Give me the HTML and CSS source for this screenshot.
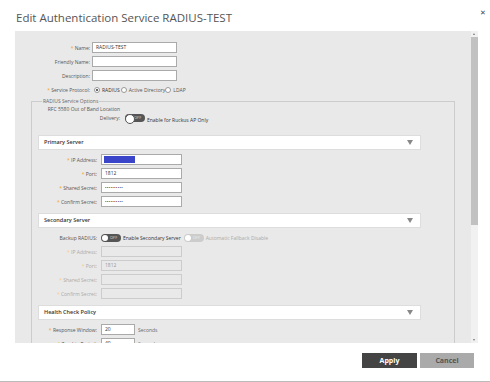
FILE: index.html
```html
<!DOCTYPE html>
<html lang="en">

<head>
    <meta charset="utf-8">
    <title>Edit Authentication Service</title>
    <link rel="stylesheet" href="styles.css">
</head>

<body>
    <div class="dialog">
        <header class="kop">
            <h1>Edit Authentication Service RADIUS-TEST</h1>
            <span class="luk">&#x2715;</span>
        </header>

        <div class="panel">
            <div class="indhold">
                <div class="felt">
                    <label><em>*</em> Name:</label>
                    <span class="input">RADIUS-TEST</span>
                </div>
                <div class="felt">
                    <label>Friendly Name:</label>
                    <span class="input"></span>
                </div>
                <div class="felt">
                    <label>Description:</label>
                    <span class="input"></span>
                </div>
                <div class="felt">
                    <label><em>*</em> Service Protocol:</label>
                    <span class="radioer">
                        <span class="radio valgt"></span><b>RADIUS</b>
                        <span class="radio"></span>Active Directory
                        <span class="radio"></span>LDAP
                    </span>
                </div>

                <fieldset class="muligheder">
                    <legend>RADIUS Service Options</legend>

                    <div class="rfc">
                        <label><span>RFC 5580 Out of Band Location</span><span>Delivery:</span></label>
                        <span class="toggle hvid">OFF</span>
                        <span class="tekst">Enable for Ruckus AP Only</span>
                    </div>

                    <div class="sektion">
                        <div class="sektionskop">Primary Server <i class="pil"></i></div>
                        <div class="felt lille">
                            <label><em>*</em> IP Address:</label>
                            <span class="input bred"><span class="markering"></span></span>
                        </div>
                        <div class="felt lille">
                            <label><em>*</em> Port:</label>
                            <span class="input bred">1812</span>
                        </div>
                        <div class="felt lille">
                            <label><em>*</em> Shared Secret:</label>
                            <span class="input bred prikker">••••••••••</span>
                        </div>
                        <div class="felt lille">
                            <label><em>*</em> Confirm Secret:</label>
                            <span class="input bred prikker">••••••••••</span>
                        </div>
                    </div>

                    <div class="sektion">
                        <div class="sektionskop">Secondary Server <i class="pil"></i></div>
                        <div class="felt lille">
                            <label>Backup RADIUS:</label>
                            <span class="valg">
                                <span class="toggle">OFF</span>
                                <span class="tekst">Enable Secondary Server</span>
                                <span class="toggle slaaet-fra">OFF</span>
                                <span class="tekst graa">Automatic Fallback Disable</span>
                            </span>
                        </div>
                        <div class="felt lille deaktiv">
                            <label><em>*</em> IP Address:</label>
                            <span class="input bred"></span>
                        </div>
                        <div class="felt lille deaktiv">
                            <label><em>*</em> Port:</label>
                            <span class="input bred">1812</span>
                        </div>
                        <div class="felt lille deaktiv">
                            <label><em>*</em> Shared Secret:</label>
                            <span class="input bred"></span>
                        </div>
                        <div class="felt lille deaktiv">
                            <label><em>*</em> Confirm Secret:</label>
                            <span class="input bred"></span>
                        </div>
                    </div>

                    <div class="sektion">
                        <div class="sektionskop">Health Check Policy <i class="pil"></i></div>
                        <div class="felt lille">
                            <label><em>*</em> Response Window:</label>
                            <span class="input kort">20</span>
                            <span class="enhed">Seconds</span>
                        </div>
                        <div class="felt lille">
                            <label><em>*</em> Zombie Period:</label>
                            <span class="input kort">40</span>
                            <span class="enhed">Seconds</span>
                        </div>
                    </div>
                </fieldset>
            </div>

            <div class="rullebjaelke">
                <span class="op"></span>
                <span class="greb"></span>
                <span class="spor"></span>
                <span class="ned"></span>
            </div>
        </div>

        <footer class="knapper">
            <button class="anvend">Apply</button>
            <button class="annuller">Cancel</button>
        </footer>
    </div>
</body>

</html>
```

FILE: styles.css
```css
* {
    box-sizing: border-box;
    margin: 0px;
    padding: 0px;
}

body {
    width: 490px;
    height: 382px;
    overflow: hidden;
    background: #fff;
    font-family: "Open Sans", "Liberation Sans", sans-serif;
    color: #555;
}

.dialog {
    height: 382px;
    display: flex;
    flex-direction: column;
    border-bottom: 1px solid #bbb;
}

.kop {
    height: 31px;
    display: flex;
    justify-content: space-between;
    align-items: flex-start;
    padding: 10px 4px 0px 16px;
}

.kop h1 {
    font-size: 11.5px;
    font-weight: normal;
    color: #555;
    line-height: 16px;
}

.luk {
    font-size: 7px;
    color: #444;
    line-height: 8px;
    margin-top: -1px;
}

.panel {
    margin-left: 15px;
    width: 463px;
    height: 312px;
    display: flex;
    background: #e9e9e9;
}

.indhold {
    flex: 1;
    overflow: hidden;
    padding-top: 11px;
}

.felt {
    display: flex;
    align-items: center;
    height: 11px;
    margin-bottom: 3px;
    font-size: 5px;
}

.felt label {
    width: 77px;
    text-align: right;
    padding-right: 2px;
    color: #555;
}

em {
    font-style: normal;
    color: #f5a623;
}

.input {
    width: 85px;
    height: 11px;
    background: #fff;
    border: 1px solid #aaa;
    padding-left: 3px;
    font-size: 5px;
    line-height: 9px;
    color: #333;
}

.radioer {
    display: flex;
    align-items: center;
    padding-left: 2px;
    font-size: 5px;
}

.radioer b {
    font-weight: normal;
    color: #333;
    margin-right: 1px;
}

.radio {
    width: 6px;
    height: 6px;
    border: 1px solid #999;
    border-radius: 50%;
    background: #fff;
    margin-right: 2px;
}

.radio.valgt {
    background: radial-gradient(circle, #666 40%, #fff 50%);
}

.muligheder {
    margin: 3px 16px 0px 16px;
    border: 1px solid #ccc;
    border-bottom: none;
    padding: 0px 0px 0px 6px;
    width: 424px;
}

.muligheder legend {
    font-size: 5px;
    line-height: 6px;
    color: #666;
    padding: 0px 1px;
    margin-left: 4px;
}

.rfc {
    display: flex;
    align-items: flex-end;
    height: 19px;
    font-size: 5px;
}

.rfc label {
    flex-shrink: 0;
    width: 82px;
    display: flex;
    flex-direction: column;
    align-items: flex-end;
    white-space: nowrap;
    line-height: 9px;
    color: #555;
}

.toggle {
    position: relative;
    display: inline-block;
    flex-shrink: 0;
    width: 20px;
    height: 8px;
    border-radius: 4px;
    background: #555;
    color: #ddd;
    font-size: 4px;
    line-height: 8px;
    padding-left: 9px;
    margin: 0px 2px 0px 3px;
}

.toggle::before {
    content: "";
    position: absolute;
    left: 1px;
    top: 1px;
    width: 6px;
    height: 6px;
    border-radius: 50%;
    background: #fff;
}

.toggle.hvid::before {
    left: 0px;
    top: 0px;
    width: 8px;
    height: 8px;
    border: 1px solid #555;
}

.toggle.slaaet-fra {
    background: #ccc;
    color: #eee;
    margin-left: 3px;
}

.rfc .toggle {
    margin: 0px 2px 1px 5px;
}

.tekst {
    color: #333;
}

.tekst.graa {
    color: #aaa;
}

.sektion {
    width: 383px;
}

.sektionskop {
    position: relative;
    height: 15px;
    margin-top: 6px;
    margin-bottom: 4px;
    background: #fff;
    border: 1px solid #ddd;
    padding-left: 5px;
    font-size: 5.5px;
    font-weight: 600;
    line-height: 13px;
    color: #333;
}

.rfc + .sektion .sektionskop {
    margin-top: 12px;
}

.pil {
    position: absolute;
    right: 7px;
    top: 4px;
    width: 0px;
    height: 0px;
    border-left: 3px solid transparent;
    border-right: 3px solid transparent;
    border-top: 5px solid #888;
}

.felt.lille label {
    width: 63px;
    padding-right: 4px;
}

.input.bred {
    width: 81px;
}

.input.kort {
    width: 34px;
}

.prikker {
    font-size: 4px;
    letter-spacing: 0.3px;
}

.markering {
    display: inline-block;
    width: 31px;
    height: 7px;
    background: #3a45c9;
    vertical-align: middle;
    margin-left: -1px;
    margin-top: -1px;
}

.valg {
    display: flex;
    align-items: center;
}

.valg .toggle {
    margin-left: 0px;
}

.valg .toggle.slaaet-fra {
    margin-left: 3px;
}

.deaktiv label {
    color: #aaa;
}

.deaktiv em {
    color: #f8c987;
}

.deaktiv .input {
    background: #e9e9e9;
    border-color: #ccc;
    color: #999;
}

.enhed {
    margin-left: 3px;
    color: #666;
}

.rullebjaelke {
    width: 7px;
    display: flex;
    flex-direction: column;
    background: #f1f1f1;
}

.op,
.ned {
    height: 6px;
    position: relative;
}

.op::after,
.ned::after {
    content: "";
    position: absolute;
    left: 2px;
    border-left: 1.5px solid transparent;
    border-right: 1.5px solid transparent;
}

.op::after {
    top: 2px;
    border-bottom: 2px solid #777;
}

.ned::after {
    top: 2px;
    border-top: 2px solid #777;
}

.greb {
    height: 188px;
    background: #c1c1c1;
}

.spor {
    flex: 1;
}

.knapper {
    flex: 1;
    display: flex;
    justify-content: flex-end;
    gap: 3px;
    padding: 10px 16px 0px 0px;
}

button {
    width: 55px;
    height: 15px;
    border: none;
    font-family: "Open Sans", "Liberation Sans", sans-serif;
    font-size: 7px;
    font-weight: bold;
}

.anvend {
    background: #444;
    color: #fff;
}

.annuller {
    background: #aaa;
    color: #555;
    width: 54px;
}
```
